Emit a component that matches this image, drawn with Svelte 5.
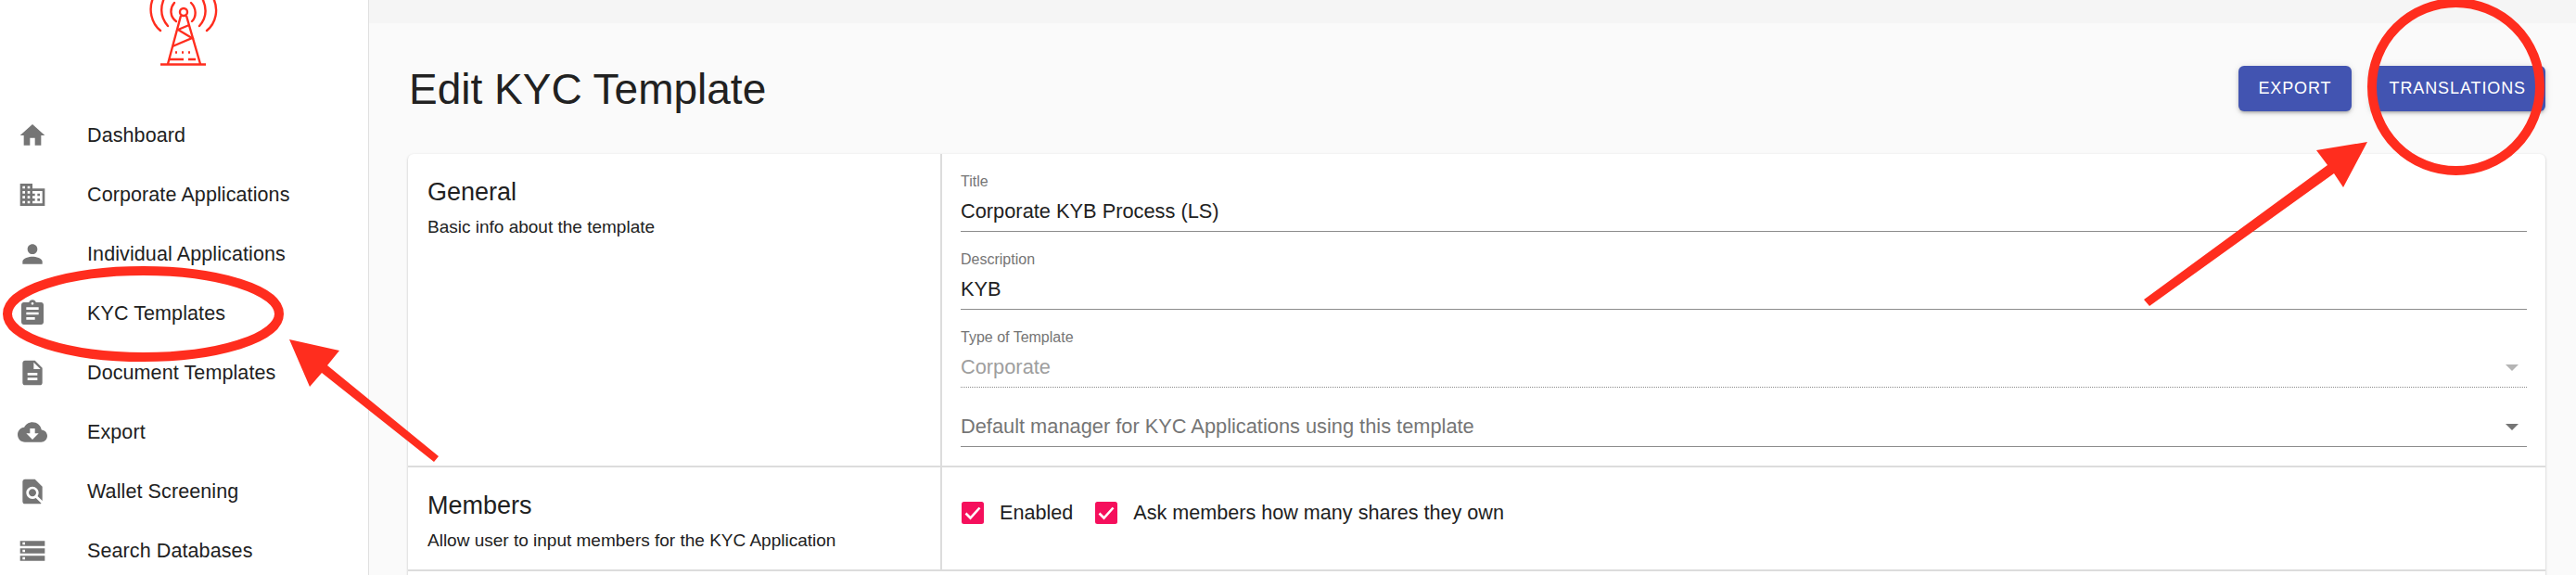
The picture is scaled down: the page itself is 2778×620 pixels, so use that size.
<script>
  const nav = [
    { label: 'Dashboard', d: 'M10 20v-6h4v6h5v-8h3L12 3 2 12h3v8z' },
    { label: 'Corporate Applications', d: 'M12 7V3H2v18h20V7H12zM6 19H4v-2h2v2zm0-4H4v-2h2v2zm0-4H4V9h2v2zm0-4H4V5h2v2zm4 12H8v-2h2v2zm0-4H8v-2h2v2zm0-4H8V9h2v2zm0-4H8V5h2v2zm10 12h-8v-2h2v-2h-2v-2h2v-2h-2V9h8v10zm-2-8h-2v2h2v-2zm0 4h-2v2h2v-2z' },
    { label: 'Individual Applications', d: 'M12 12c2.21 0 4-1.79 4-4s-1.79-4-4-4-4 1.79-4 4 1.79 4 4 4zm0 2c-2.67 0-8 1.34-8 4v2h16v-2c0-2.66-5.33-4-8-4z' },
    { label: 'KYC Templates', d: 'M19 3h-4.18C14.4 1.84 13.3 1 12 1c-1.3 0-2.4.84-2.82 2H5c-1.1 0-2 .9-2 2v14c0 1.1.9 2 2 2h14c1.1 0 2-.9 2-2V5c0-1.1-.9-2-2-2zm-7 0c.55 0 1 .45 1 1s-.45 1-1 1-1-.45-1-1 .45-1 1-1zm2 14H7v-2h7v2zm3-4H7v-2h10v2zm0-4H7V7h10v2z' },
    { label: 'Document Templates', d: 'M14 2H6c-1.1 0-1.99.9-1.99 2L4 20c0 1.1.89 2 1.99 2H18c1.1 0 2-.9 2-2V8l-6-6zm2 16H8v-2h8v2zm0-4H8v-2h8v2zm-3-5V3.5L18.5 9H13z' },
    { label: 'Export', d: 'M19.35 10.04C18.67 6.59 15.64 4 12 4 9.11 4 6.6 5.64 5.35 8.04 2.34 8.36 0 10.91 0 14c0 3.31 2.69 6 6 6h13c2.76 0 5-2.24 5-5 0-2.64-2.05-4.78-4.65-4.96zM17 13l-5 5-5-5h3V9h4v4h3z' },
    { label: 'Wallet Screening', d: 'M20 19.59V8l-6-6H6c-1.1 0-1.99.9-1.99 2L4 20c0 1.1.89 2 1.99 2H18c.45 0 .85-.15 1.19-.4l-4.43-4.43c-.8.52-1.74.83-2.76.83-2.76 0-5-2.24-5-5s2.24-5 5-5 5 2.24 5 5c0 1.02-.31 1.96-.83 2.75L20 19.59zM9 13c0 1.66 1.34 3 3 3s3-1.34 3-3-1.34-3-3-3-3 1.34-3 3z' },
    { label: 'Search Databases', d: 'M2 20h20v-4H2v4zm2-3h2v2H4v-2zM2 4v4h20V4H2zm4 3H4V5h2v2zm-4 7h20v-4H2v4zm2-3h2v2H4v-2z' }
  ];
</script>

<div class="page">
  <aside class="sidebar">
    <svg class="logo" width="397" height="114" viewBox="0 0 397 114" fill="none" stroke="#ff2d1e" stroke-width="2.4" stroke-linecap="round">
      <path d="M173 33C163 25 160 10 165 -2M223 33C233 25 236 10 230 -2M181 28C174 20 172 10 177 -2M215 28C222 20 224 10 218 -2M188 3C183 9 183 18 190 23M206 3C212 9 212 18 207 23" />
      <circle cx="198" cy="13" r="4" />
      <path d="M195 17L181 69M201 17L216 69M173 69.5H222" stroke-linecap="butt" />
      <path d="M192 32L204 27M192 32L207 41L186 50" stroke-linecap="butt" />
      <path d="M189 56.5h2M196 56.5h2M203 56.5h2M182 64h16M203 64h8" stroke-linecap="butt" />
    </svg>
    <nav class="nav">
      {#each nav as item}
        <div class="nav-item">
          <svg class="nav-icon" viewBox="0 0 24 24"><path d={item.d} /></svg>
          <span>{item.label}</span>
        </div>
      {/each}
    </nav>
  </aside>

  <main class="main">
    <div class="strip"></div>
    <div class="content">
      <header class="head">
        <h1>Edit KYC Template</h1>
        <div class="actions">
          <button class="btn">EXPORT</button>
          <button class="btn">TRANSLATIONS</button>
        </div>
      </header>

      <section class="card">
        <div class="row row-general">
          <div class="info">
            <h2>General</h2>
            <p>Basic info about the template</p>
          </div>
          <div class="fields">
            <div class="field">
              <span class="label">Title</span>
              <span class="value">Corporate KYB Process (LS)</span>
            </div>
            <div class="field">
              <span class="label">Description</span>
              <span class="value">KYB</span>
            </div>
            <div class="field disabled">
              <span class="label">Type of Template</span>
              <span class="value">Corporate</span>
              <i class="caret"></i>
            </div>
            <div class="field short">
              <span class="value placeholder">Default manager for KYC Applications using this template</span>
              <i class="caret"></i>
            </div>
          </div>
        </div>
        <div class="row row-members">
          <div class="info">
            <h2>Members</h2>
            <p>Allow user to input members for the KYC Application</p>
          </div>
          <div class="checks">
            <label class="check">
              <svg class="box" viewBox="0 0 24 24"><rect width="24" height="24" rx="2.5" fill="#f50f5c" /><path d="M4.5 12.5l5 5 10-11" fill="none" stroke="#fff" stroke-width="2.6" /></svg>
              <span>Enabled</span>
            </label>
            <label class="check">
              <svg class="box" viewBox="0 0 24 24"><rect width="24" height="24" rx="2.5" fill="#f50f5c" /><path d="M4.5 12.5l5 5 10-11" fill="none" stroke="#fff" stroke-width="2.6" /></svg>
              <span>Ask members how many shares they own</span>
            </label>
          </div>
        </div>
        <div class="row"></div>
      </section>
    </div>
  </main>

  <svg class="marks" width="2778" height="620" viewBox="0 0 2778 620">
    <ellipse cx="154.5" cy="338.5" rx="146.5" ry="46.5" fill="none" stroke="#ff2d1e" stroke-width="10" />
    <circle cx="2648.5" cy="93.5" r="90.5" fill="none" stroke="#ff2d1e" stroke-width="10" />
    <polygon fill="#ff2d1e" points="312,366 366,378 353,394 473,492 468,498 347,402 334,417" />
    <polygon fill="#ff2d1e" points="2553,153 2498,162 2510,178 2312,323 2318,330 2517,187 2527,202" />
  </svg>
</div>

<style>
  :global(body) {
    margin: 0;
    background: #fafafa;
  }
  .page {
    position: relative;
    display: flex;
    width: 2778px;
    height: 620px;
    overflow: hidden;
    font-family: "Liberation Sans", Arial, sans-serif;
    color: #212121;
  }
  .sidebar {
    flex: 0 0 397px;
    background: #fff;
    border-right: 1px solid #e0e0e0;
  }
  .logo {
    display: block;
  }
  .nav {
    display: flex;
    flex-direction: column;
  }
  .nav-item {
    display: flex;
    align-items: center;
    height: 64px;
    padding-left: 19px;
    font-size: 21.5px;
    letter-spacing: 0.1px;
  }
  .nav-icon {
    width: 32px;
    height: 32px;
    margin-right: 43px;
    fill: #757575;
  }
  .main {
    flex: 1;
    min-width: 0;
  }
  .strip {
    height: 25px;
    background: #f5f5f5;
  }
  .content {
    padding: 0 33px 0 42px;
    background: #fafafa;
  }
  .head {
    display: flex;
    justify-content: space-between;
    align-items: center;
    height: 141px;
  }
  h1 {
    margin: 0 0 0 1px;
    font-size: 46px;
    font-weight: 400;
  }
  .actions {
    display: flex;
    gap: 20px;
  }
  .btn {
    height: 49px;
    padding: 0 21px;
    border: 0;
    border-radius: 6px;
    background: #4254b1;
    color: #fff;
    font: 400 18px "Liberation Sans", Arial, sans-serif;
    letter-spacing: 0.9px;
    box-shadow: 0 3px 3px -2px rgba(0,0,0,.2), 0 2px 4px rgba(0,0,0,.14), 0 1px 8px rgba(0,0,0,.1);
  }
  .card {
    background: #fff;
    border-radius: 6px;
    box-shadow: 0 1px 3px rgba(0,0,0,.2), 0 1px 2px rgba(0,0,0,.06);
  }
  .row {
    display: grid;
    grid-template-columns: 576px 1fr;
    box-sizing: border-box;
    border-bottom: 2px solid #dcdcdc;
  }
  .row-general {
    height: 338px;
  }
  .row-members {
    height: 112px;
  }
  .row:last-child {
    height: 40px;
    border-bottom: 0;
  }
  .info {
    padding: 24px 21px 0;
    border-right: 2px solid #dcdcdc;
  }
  h2 {
    margin: 0;
    font-size: 27px;
    line-height: 34px;
    font-weight: 400;
  }
  p {
    margin: 7px 0 0;
    font-size: 19px;
    line-height: 28px;
  }
  .fields {
    padding: 0 20px 0 20px;
  }
  .field {
    position: relative;
    display: flex;
    flex-direction: column;
    justify-content: flex-end;
    height: 84px;
    box-sizing: border-box;
    border-bottom: 1px solid #8c8c8c;
  }
  .field.short {
    height: 64px;
  }
  .field.disabled {
    border-bottom: 1px dotted #8c8c8c;
  }
  .label {
    margin-bottom: 2px;
    font-size: 16px;
    line-height: 18px;
    color: #757575;
  }
  .value {
    font-size: 21.8px;
    line-height: 42px;
  }
  .disabled .value {
    color: #9e9e9e;
  }
  .placeholder {
    color: #757575;
  }
  .caret {
    position: absolute;
    right: 9px;
    bottom: 17px;
    width: 0;
    height: 0;
    border-left: 7px solid transparent;
    border-right: 7px solid transparent;
    border-top: 7px solid #757575;
  }
  .disabled .caret {
    border-top-color: #b5b5b5;
  }
  .checks {
    display: flex;
    align-items: flex-start;
    gap: 24px;
    padding: 36px 0 0 21px;
  }
  .check {
    display: flex;
    align-items: center;
    gap: 17px;
    font-size: 21.6px;
  }
  .box {
    width: 24px;
    height: 24px;
  }
  .marks {
    position: absolute;
    inset: 0;
    pointer-events: none;
  }
</style>
